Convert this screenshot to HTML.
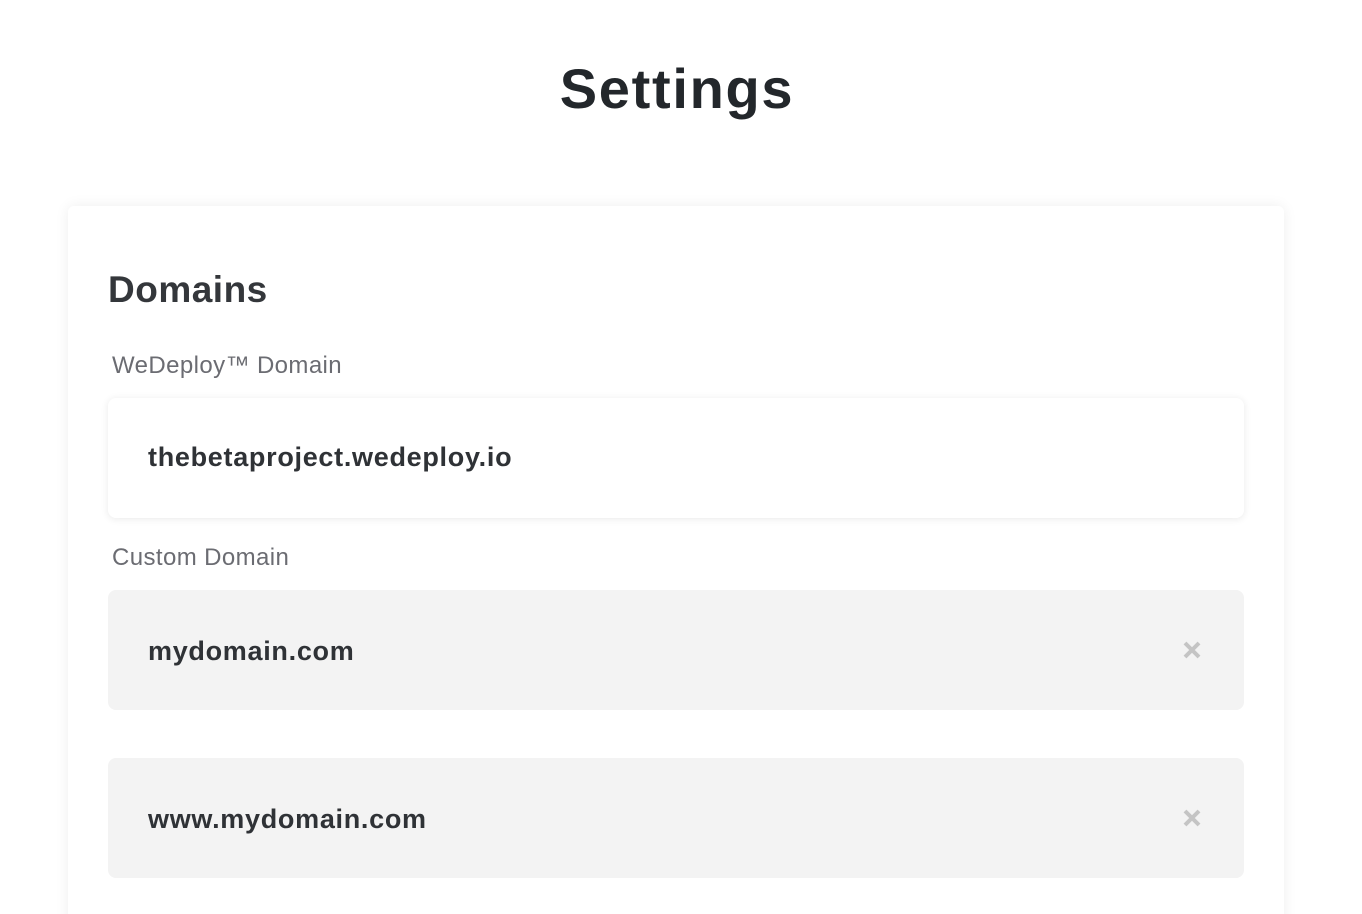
<!DOCTYPE html>
<html style="overflow:hidden;height:914px"><head><style>
body{margin:0;background:#fff;font-family:"Liberation Sans",sans-serif;width:1362px;height:914px;overflow:hidden;position:relative}
h1{position:absolute;top:56px;left:0;width:1362px;text-align:center;margin:0;font-size:56px;font-weight:bold;color:#23272b;letter-spacing:1.7px;text-indent:-8px}
.card{position:absolute;left:68px;top:206px;width:1216px;height:730px;background:#fff;border-radius:6px 6px 0 0;box-shadow:0 0 14px rgba(0,0,0,0.07)}
h2{position:absolute;left:108px;top:269px;margin:0;font-size:37px;font-weight:bold;color:#34373b;letter-spacing:0.5px}
.lbl{position:absolute;left:112px;font-size:24px;color:#6b6c72;letter-spacing:0.4px}
.box{position:absolute;left:108px;width:1136px;height:120px;border-radius:8px;box-sizing:border-box;padding-left:40px;line-height:120px;font-size:27px;font-weight:bold;color:#2f3236;letter-spacing:0.7px}
.w{background:#fff;box-shadow:0 1px 8px rgba(0,0,0,0.09)}
.g{background:#f3f3f3}
.x{position:absolute;right:43px;top:51px;width:18px;height:18px}
</style></head><body>
<h1>Settings</h1>
<div class="card"></div>
<h2>Domains</h2>
<div class="lbl" style="top:352px">WeDeploy™ Domain</div>
<div class="box w" style="top:398px;line-height:118px">thebetaproject.wedeploy.io</div>
<div class="lbl" style="top:544px">Custom Domain</div>
<div class="box g" style="top:590px;line-height:122px">mydomain.com<svg class="x" viewBox="0 0 18 18"><path d="M2 2L16 16M16 2L2 16" stroke="#c4c4c4" stroke-width="4"/></svg></div>
<div class="box g" style="top:758px;line-height:122px">www.mydomain.com<svg class="x" viewBox="0 0 18 18"><path d="M2 2L16 16M16 2L2 16" stroke="#c4c4c4" stroke-width="4"/></svg></div>
</body></html>
